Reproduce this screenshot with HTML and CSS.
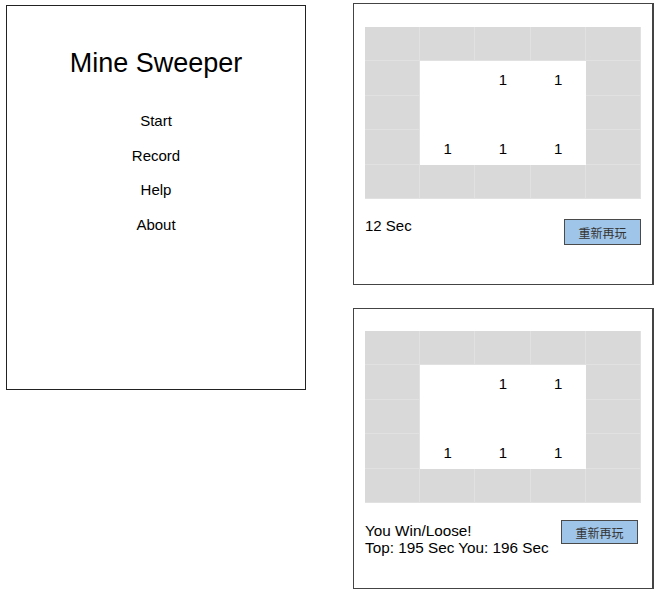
FILE: index.html
```html
<!DOCTYPE html>
<html lang="en">
<head>
    <meta charset="UTF-8">
    <meta name="viewport" content="width=device-width, initial-scale=1.0">
    <title>Mine Sweeper</title>
    <link rel="stylesheet" href="styles.css">
</head>
<body>
    <div class="screens">
        <div class="menu-screen">
            <h1>Mine Sweeper</h1>
            <ul class="menu">
                <li>Start</li>
                <li>Record</li>
                <li>Help</li>
                <li>About</li>
            </ul>
        </div>

        <div class="game-column">
            <div class="game-screen playing">
                <div class="board">
                    <div class="cell"></div><div class="cell"></div><div class="cell"></div><div class="cell"></div><div class="cell"></div>
                    <div class="cell"></div><div class="cell open"></div><div class="cell open">1</div><div class="cell open">1</div><div class="cell"></div>
                    <div class="cell"></div><div class="cell open"></div><div class="cell open"></div><div class="cell open"></div><div class="cell"></div>
                    <div class="cell"></div><div class="cell open">1</div><div class="cell open">1</div><div class="cell open">1</div><div class="cell"></div>
                    <div class="cell"></div><div class="cell"></div><div class="cell"></div><div class="cell"></div><div class="cell"></div>
                </div>
                <div class="footer">
                    <div class="status">12 Sec</div>
                    <button class="replay">重新再玩</button>
                </div>
            </div>

            <div class="game-screen finished">
                <div class="board">
                    <div class="cell"></div><div class="cell"></div><div class="cell"></div><div class="cell"></div><div class="cell"></div>
                    <div class="cell"></div><div class="cell open"></div><div class="cell open">1</div><div class="cell open">1</div><div class="cell"></div>
                    <div class="cell"></div><div class="cell open"></div><div class="cell open"></div><div class="cell open"></div><div class="cell"></div>
                    <div class="cell"></div><div class="cell open">1</div><div class="cell open">1</div><div class="cell open">1</div><div class="cell"></div>
                    <div class="cell"></div><div class="cell"></div><div class="cell"></div><div class="cell"></div><div class="cell"></div>
                </div>
                <div class="footer">
                    <div class="status">You Win/Loose!<br>Top: 195 Sec You: 196 Sec</div>
                    <button class="replay">重新再玩</button>
                </div>
            </div>
        </div>
    </div>
</body>
</html>
```

FILE: styles.css
```css
body {
    margin: 0;
    font-family: "Liberation Sans", Arial, sans-serif;
    color: #000;
    background-color: #fff;
}
.screens {
    display: flex;
    align-items: flex-start;
    gap: 47px;
    padding: 3px 0 0 6px;
}
.menu-screen {
    box-sizing: border-box;
    width: 300px;
    height: 385px;
    margin-top: 2px;
    border: 1px solid #222;
    padding-top: 42px;
    text-align: center;
}
.menu-screen h1 {
    margin: 0;
    font-size: 27px;
    font-weight: normal;
    line-height: 30px;
}
.menu {
    list-style: none;
    margin: 26px 0 0;
    padding: 0;
    font-size: 15px;
    line-height: 34.6px;
}
.game-column {
    display: flex;
    flex-direction: column;
    gap: 23px;
}
.game-screen {
    box-sizing: border-box;
    width: 301px;
    height: 282px;
    border: 1px solid #444;
    border-right-width: 2px;
    padding: 23px 11px 0 11px;
}
.game-screen.finished {
    height: 281px;
    padding-top: 22px;
}
.board {
    display: grid;
    grid-template-columns: repeat(5, 1fr);
    grid-template-rows: repeat(5, 1fr);
    width: 276px;
    height: 172px;
    background-color: #d9d9d9;
}
.cell {
    box-sizing: border-box;
    border-right: 1px solid #e1e1e1;
    border-bottom: 1px solid #e1e1e1;
    display: flex;
    align-items: center;
    justify-content: center;
    padding-top: 2px;
    font-size: 15px;
    color: #000;
}
.cell.open {
    background-color: #fff;
    border: none;
}
.footer {
    display: flex;
    justify-content: space-between;
    align-items: flex-start;
    margin-top: 18px;
}
.status {
    font-size: 15px;
    line-height: 18px;
}
.replay {
    box-sizing: border-box;
    width: 77px;
    height: 26px;
    margin-top: 2px;
    padding: 0;
    border: 1px solid #4a4a4a;
    border-radius: 0;
    background-color: #9fc5e8;
    color: #333;
    font-family: "Noto Sans CJK TC", "Noto Sans CJK SC", sans-serif;
    font-size: 12px;
}
.finished .footer {
    margin-top: 17px;
}
.finished .status {
    padding-top: 2px;
    font-size: 15.3px;
    line-height: 17.4px;
}
.finished .replay {
    height: 24px;
    margin: 0 3px 0 0;
}
```
